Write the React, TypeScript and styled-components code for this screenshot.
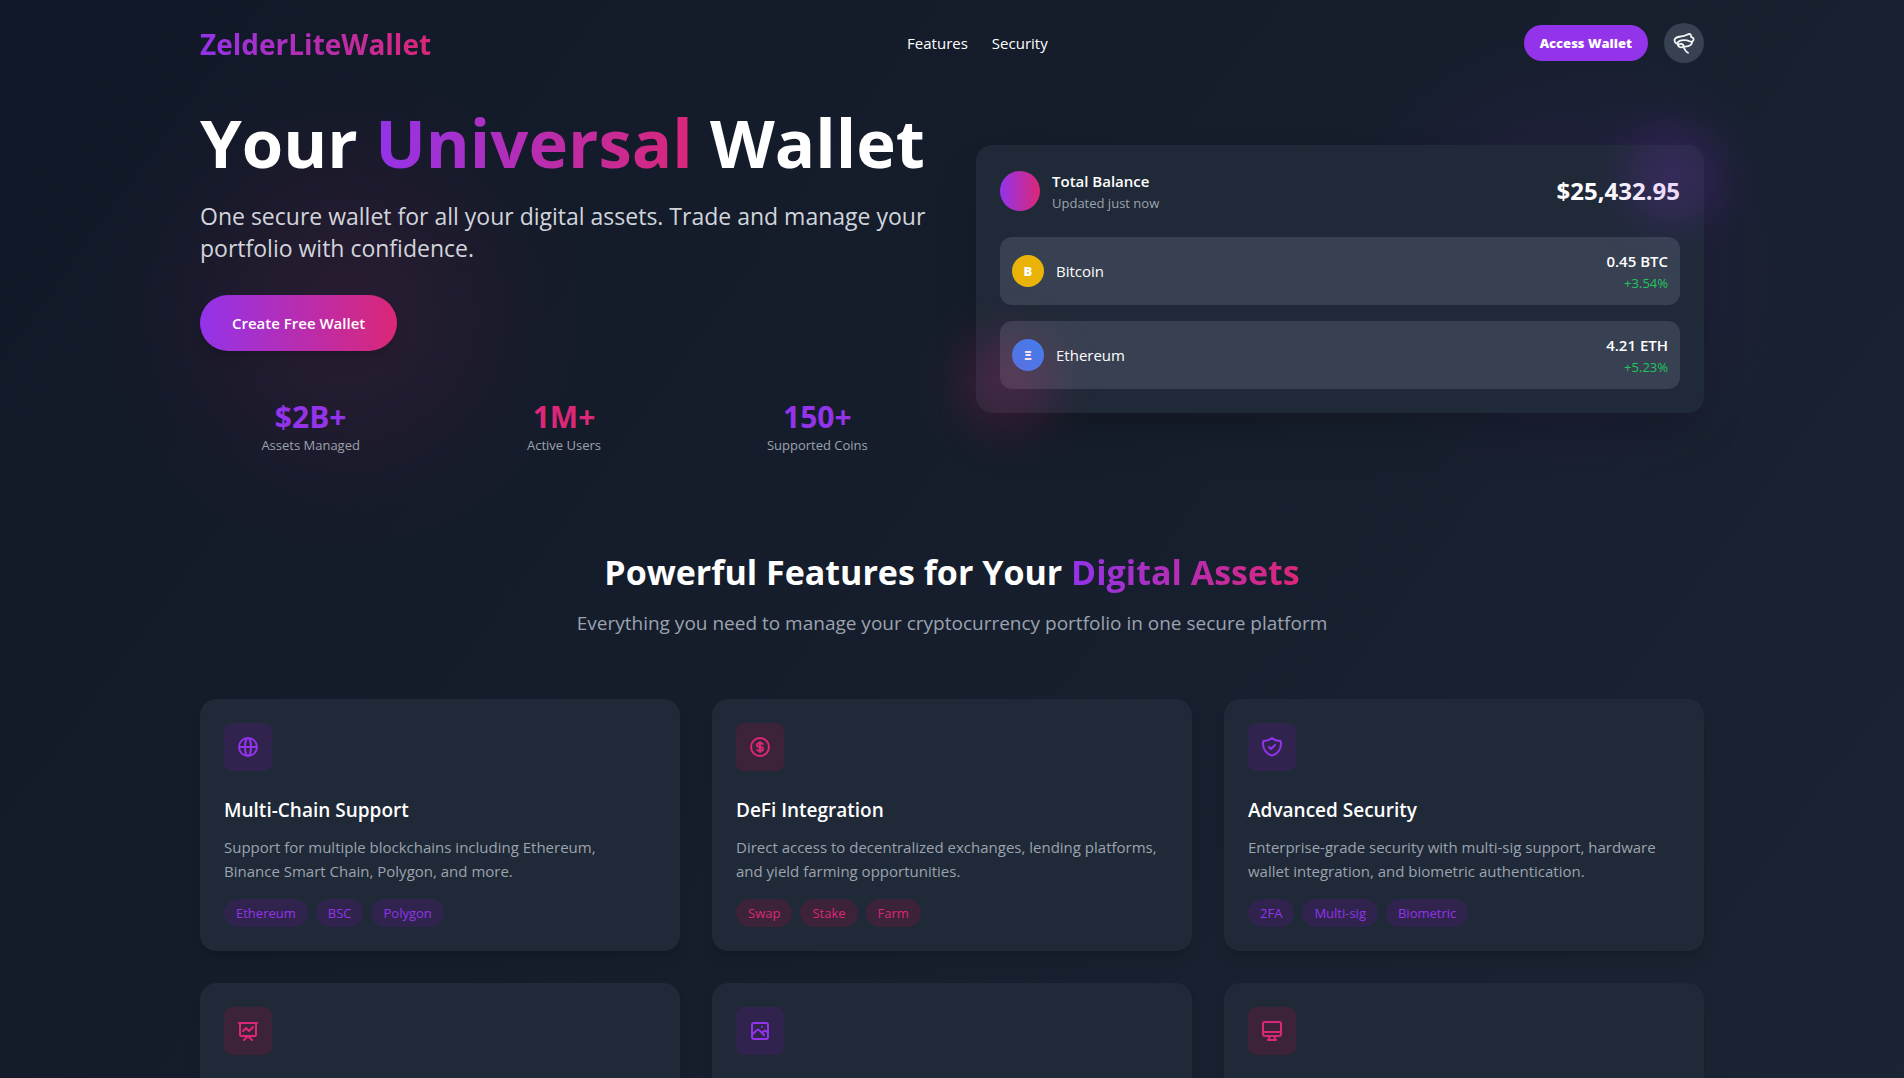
import React from 'react';
import styled, { createGlobalStyle } from 'styled-components';

const PURPLE = '#9333ea';
const PINK = '#db2777';
const BRAND = `linear-gradient(to right, ${PURPLE}, ${PINK})`;

type Tone = 'purple' | 'pink';
const toneColor = { purple: PURPLE, pink: PINK };
const toneTint = { purple: 'rgba(88, 28, 135, 0.3)', pink: 'rgba(131, 24, 67, 0.3)' };

const GlobalStyle = createGlobalStyle`
  *, *::before, *::after { box-sizing: border-box; }
  body {
    margin: 0;
    background: #111827;
    color: #fff;
    font-family: "Segoe UI", "Open Sans", "Noto Sans", sans-serif;
    font-size: 15px;
    line-height: 24px;
  }
  h1, h2, h3, p { margin: 0; }
  button { font-family: inherit; }
`;

const Page = styled.div`
  position: relative;
  min-height: 100vh;
  overflow: hidden;
  background: linear-gradient(to bottom right, #111827, #1f2937) 0 0 / 100% 2600px;
`;

const Container = styled.div`
  position: relative;
  width: 100%;
  max-width: 1536px;
  margin: 0 auto;
  padding: 0 16px;
`;

const Header = styled.header`
  display: flex;
  align-items: center;
  justify-content: space-between;
  height: 86px;
`;

const GradientText = styled.span`
  background: ${BRAND};
  background-clip: text;
  -webkit-background-clip: text;
  color: transparent;
`;

const Logo = styled(GradientText)`
  padding-top: 2px;
  font-size: 28px;
  line-height: 36px;
  font-weight: 700;
`;

const Nav = styled.nav`
  display: flex;
  gap: 24px;
`;

const NavLink = styled.a`
  color: #fff;
  text-decoration: none;
`;

const Actions = styled.div`
  display: flex;
  align-items: center;
  gap: 16px;
`;

const AccessButton = styled.button`
  padding: 8px 16px;
  border: 0;
  border-radius: 999px;
  background: ${PURPLE};
  color: #fff;
  font-size: 13px;
  line-height: 20px;
  font-weight: 800;
  cursor: pointer;
`;

const RoundButton = styled.button`
  display: grid;
  place-items: center;
  width: 40px;
  height: 40px;
  padding: 0;
  border: 0;
  border-radius: 50%;
  background: #374151;
  color: #f3f4f6;
  cursor: pointer;
`;

const Hero = styled.section`
  display: grid;
  grid-template-columns: repeat(2, minmax(0, 1fr));
  align-items: center;
  gap: 48px;
  padding: 17px 0 48px;
`;

const HeroTitle = styled.h1`
  margin-bottom: 19px;
  font-size: 67px;
  line-height: 78px;
  font-weight: 700;
  white-space: nowrap;
`;

const HeroText = styled.p`
  margin-bottom: 31px;
  color: #d1d5db;
  font-size: 23px;
  line-height: 32px;
`;

const PrimaryButton = styled.button`
  padding: 16px 32px;
  border: 0;
  border-radius: 999px;
  background: ${BRAND};
  color: #fff;
  font-size: 15px;
  line-height: 24px;
  font-weight: 600;
  box-shadow: 0 10px 15px -3px rgba(0, 0, 0, 0.1), 0 4px 6px -4px rgba(0, 0, 0, 0.1);
  cursor: pointer;
`;

const Stats = styled.div`
  display: grid;
  grid-template-columns: repeat(3, 1fr);
  gap: 32px;
  margin-top: 48px;
  text-align: center;
`;

const StatValue = styled.div<{ $tone: Tone }>`
  color: ${(p) => toneColor[p.$tone]};
  font-size: 30px;
  line-height: 36px;
  font-weight: 700;
`;

const StatLabel = styled.div`
  color: #9ca3af;
  font-size: 13px;
  line-height: 20px;
`;

const BalanceCard = styled.div`
  position: relative;
  padding: 24px;
  border-radius: 16px;
  background: #1f2937;
  box-shadow: 0 25px 50px -12px rgba(0, 0, 0, 0.25);
`;

const Between = styled.div`
  display: flex;
  align-items: center;
  justify-content: space-between;
`;

const BalanceHead = styled(Between)`
  margin-bottom: 24px;
`;

const Group = styled.div`
  display: flex;
  align-items: center;
  gap: 12px;
`;

const Avatar = styled.span`
  width: 40px;
  height: 40px;
  border-radius: 50%;
  background: ${BRAND};
`;

const Strong = styled.div`
  font-weight: 600;
`;

const Muted = styled.div`
  color: #9ca3af;
  font-size: 13px;
  line-height: 20px;
`;

const Amount = styled.div`
  font-size: 24px;
  line-height: 32px;
  font-weight: 700;
`;

const Assets = styled.div`
  display: grid;
  gap: 16px;
`;

const AssetRow = styled(Between)`
  padding: 12px;
  border-radius: 12px;
  background: #374151;
`;

const CoinBadge = styled.span<{ $color: string }>`
  display: grid;
  place-items: center;
  width: 32px;
  height: 32px;
  border-radius: 50%;
  background: ${(p) => p.$color};
  font-size: 13px;
  line-height: 20px;
  font-weight: 800;
`;

const Holding = styled.div`
  text-align: right;
`;

const Change = styled.div`
  color: #22c55e;
  font-size: 13px;
  line-height: 20px;
`;

const Glow = styled.div<{ $tone: Tone }>`
  position: absolute;
  width: 96px;
  height: 96px;
  border-radius: 50%;
  background: ${(p) => toneColor[p.$tone]};
  opacity: 0.2;
  filter: blur(24px);
  pointer-events: none;
  ${(p) => (p.$tone === 'purple' ? 'top: -16px; right: -16px;' : 'bottom: -16px; left: -16px;')}
`;

const Backdrop = styled.div<{ $tone: Tone }>`
  position: absolute;
  width: 288px;
  height: 288px;
  border-radius: 50%;
  background: ${(p) => toneColor[p.$tone]};
  opacity: 0.1;
  filter: blur(64px);
  pointer-events: none;
  ${(p) => (p.$tone === 'purple' ? 'top: 120px; right: 190px;' : 'top: 166px; left: 200px;')}
`;

const Features = styled.section`
  padding: 48px 0;
`;

const SectionTitle = styled.h2`
  margin-bottom: 16px;
  font-size: 34px;
  line-height: 42px;
  font-weight: 700;
  text-align: center;
`;

const SectionText = styled.p`
  margin-bottom: 62px;
  color: #9ca3af;
  font-size: 19px;
  line-height: 28px;
  text-align: center;
`;

const CardGrid = styled.div`
  display: grid;
  grid-template-columns: repeat(3, minmax(0, 1fr));
  gap: 32px;
`;

const Card = styled.article`
  padding: 24px;
  border-radius: 16px;
  background: #1f2937;
  box-shadow: 0 10px 15px -3px rgba(0, 0, 0, 0.1), 0 4px 6px -4px rgba(0, 0, 0, 0.1);
`;

const IconTile = styled.div<{ $tone: Tone }>`
  display: grid;
  place-items: center;
  width: 48px;
  height: 48px;
  margin-bottom: 24px;
  border-radius: 8px;
  background: ${(p) => toneTint[p.$tone]};
  color: ${(p) => toneColor[p.$tone]};
`;

const CardTitle = styled.h3`
  margin-bottom: 10px;
  font-size: 19px;
  line-height: 30px;
  font-weight: 600;
`;

const CardText = styled.p`
  margin-bottom: 16px;
  padding-right: 4px;
  color: #9ca3af;
`;

const Tags = styled.div`
  display: flex;
  flex-wrap: wrap;
  gap: 8px;
`;

const Tag = styled.span<{ $tone: Tone }>`
  padding: 4px 12px;
  border-radius: 999px;
  background: ${(p) => toneTint[p.$tone]};
  color: ${(p) => toneColor[p.$tone]};
  font-size: 13px;
  line-height: 20px;
`;

const Outline = ({ d }: { d: string }) => (
  <svg width="24" height="24" viewBox="0 0 24 24" fill="none" stroke="currentColor" strokeWidth="2" strokeLinecap="round" strokeLinejoin="round" aria-hidden="true">
    <path d={d} />
  </svg>
);

const LassoIcon = () => (
  <svg width="24" height="24" viewBox="0 0 24 24" fill="none" stroke="currentColor" strokeWidth="1.8" strokeLinecap="round" strokeLinejoin="round" aria-hidden="true">
    <path d="M7 13.500C4.500 13 2.500 11 2.500 8.800C3.500 5.500 7.500 5.800 10.500 5.200C13.500 5 15.500 2.800 18 3C19.500 3.500 19 5 19.300 6.200C21 6.500 22 7.500 21.500 9C21 10.500 19.500 11 18 10.500C14.500 8.800 8.500 8.500 6 11C4.800 13.500 6.500 16.500 9.500 16.300C12 16 12 13.500 9.800 13C8.200 12.700 7 13.500 7 13.500" />
    <path d="M20 10.800C20.500 13.500 17.500 16 12 15.500M11.300 16C12.500 18 13.500 20.500 16 21.800" />
  </svg>
);

const coins = [
  { symbol: 'B', name: 'Bitcoin', color: '#eab308', amount: '0.45 BTC', change: '+3.54%' },
  { symbol: 'Ξ', name: 'Ethereum', color: '#3b82f6', amount: '4.21 ETH', change: '+5.23%' },
];

const stats: { value: string; label: string; tone: Tone }[] = [
  { value: '$2B+', label: 'Assets Managed', tone: 'purple' },
  { value: '1M+', label: 'Active Users', tone: 'pink' },
  { value: '150+', label: 'Supported Coins', tone: 'purple' },
];

type Feature = { icon: string; tone: Tone; title: string; text: string; tags: string[] };

const features: Feature[] = [
  {
    icon: 'M21 12a9 9 0 01-9 9m9-9a9 9 0 00-9-9m9 9H3m9 9a9 9 0 01-9-9m9 9c1.657 0 3-4.03 3-9s-1.343-9-3-9m0 18c-1.657 0-3-4.03-3-9s1.343-9 3-9m-9 9a9 9 0 019-9',
    tone: 'purple',
    title: 'Multi-Chain Support',
    text: 'Support for multiple blockchains including Ethereum, Binance Smart Chain, Polygon, and more.',
    tags: ['Ethereum', 'BSC', 'Polygon'],
  },
  {
    icon: 'M12 8c-1.657 0-3 .895-3 2s1.343 2 3 2 3 .895 3 2-1.343 2-3 2m0-8c1.11 0 2.08.402 2.599 1M12 8V7m0 1v8m0 0v1m0-1c-1.11 0-2.08-.402-2.599-1M21 12a9 9 0 11-18 0 9 9 0 0118 0z',
    tone: 'pink',
    title: 'DeFi Integration',
    text: 'Direct access to decentralized exchanges, lending platforms, and yield farming opportunities.',
    tags: ['Swap', 'Stake', 'Farm'],
  },
  {
    icon: 'M9 12l2 2 4-4m5.618-4.016A11.955 11.955 0 0112 2.944a11.955 11.955 0 01-8.618 3.04A12.02 12.02 0 003 9c0 5.591 3.824 10.29 9 11.622 5.176-1.332 9-6.03 9-11.622 0-1.042-.133-2.052-.382-3.016z',
    tone: 'purple',
    title: 'Advanced Security',
    text: 'Enterprise-grade security with multi-sig support, hardware wallet integration, and biometric authentication.',
    tags: ['2FA', 'Multi-sig', 'Biometric'],
  },
];

const nextFeatures: { icon: string; tone: Tone }[] = [
  { icon: 'M7 12l3-3 3 3 4-4M8 21l4-4 4 4M3 4h18M4 4h16v12a1 1 0 01-1 1H5a1 1 0 01-1-1V4z', tone: 'pink' },
  { icon: 'M4 16l4.586-4.586a2 2 0 012.828 0L16 16m-2-2l1.586-1.586a2 2 0 012.828 0L20 14m-6-6h.01M6 20h12a2 2 0 002-2V6a2 2 0 00-2-2H6a2 2 0 00-2 2v12a2 2 0 002 2z', tone: 'purple' },
  { icon: 'M9.75 17L9 20l-1 1h8l-1-1-.75-3M3 13h18M5 17h14a2 2 0 002-2V5a2 2 0 00-2-2H5a2 2 0 00-2 2v10a2 2 0 002 2z', tone: 'pink' },
];

export default function App() {
  return (
    <Page>
      <GlobalStyle />
      <Backdrop $tone="purple" />
      <Backdrop $tone="pink" />
      <Container>
        <Header>
          <Logo>ZelderLiteWallet</Logo>
          <Nav>
            <NavLink href="#features">Features</NavLink>
            <NavLink href="#security">Security</NavLink>
          </Nav>
          <Actions>
            <AccessButton type="button">Access Wallet</AccessButton>
            <RoundButton type="button" aria-label="Connect">
              <LassoIcon />
            </RoundButton>
          </Actions>
        </Header>
        <Hero>
          <div>
            <HeroTitle>
              Your <GradientText>Universal</GradientText> Wallet
            </HeroTitle>
            <HeroText>One secure wallet for all your digital assets. Trade and manage your portfolio with confidence.</HeroText>
            <PrimaryButton type="button">Create Free Wallet</PrimaryButton>
            <Stats>
              {stats.map((s) => (
                <div key={s.label}>
                  <StatValue $tone={s.tone}>{s.value}</StatValue>
                  <StatLabel>{s.label}</StatLabel>
                </div>
              ))}
            </Stats>
          </div>
          <BalanceCard>
            <BalanceHead>
              <Group>
                <Avatar />
                <div>
                  <Strong>Total Balance</Strong>
                  <Muted>Updated just now</Muted>
                </div>
              </Group>
              <Amount>$25,432.95</Amount>
            </BalanceHead>
            <Assets>
              {coins.map((c) => (
                <AssetRow key={c.name}>
                  <Group>
                    <CoinBadge $color={c.color}>{c.symbol}</CoinBadge>
                    <span>{c.name}</span>
                  </Group>
                  <Holding>
                    <Strong>{c.amount}</Strong>
                    <Change>{c.change}</Change>
                  </Holding>
                </AssetRow>
              ))}
            </Assets>
            <Glow $tone="purple" />
            <Glow $tone="pink" />
          </BalanceCard>
        </Hero>
        <Features id="features">
          <SectionTitle>
            Powerful Features for Your <GradientText>Digital Assets</GradientText>
          </SectionTitle>
          <SectionText>Everything you need to manage your cryptocurrency portfolio in one secure platform</SectionText>
          <CardGrid>
            {features.map((f) => (
              <Card key={f.title}>
                <IconTile $tone={f.tone}>
                  <Outline d={f.icon} />
                </IconTile>
                <CardTitle>{f.title}</CardTitle>
                <CardText>{f.text}</CardText>
                <Tags>
                  {f.tags.map((t) => (
                    <Tag key={t} $tone={f.tone}>
                      {t}
                    </Tag>
                  ))}
                </Tags>
              </Card>
            ))}
            {nextFeatures.map((f) => (
              <Card key={f.icon}>
                <IconTile $tone={f.tone}>
                  <Outline d={f.icon} />
                </IconTile>
              </Card>
            ))}
          </CardGrid>
        </Features>
      </Container>
    </Page>
  );
}
